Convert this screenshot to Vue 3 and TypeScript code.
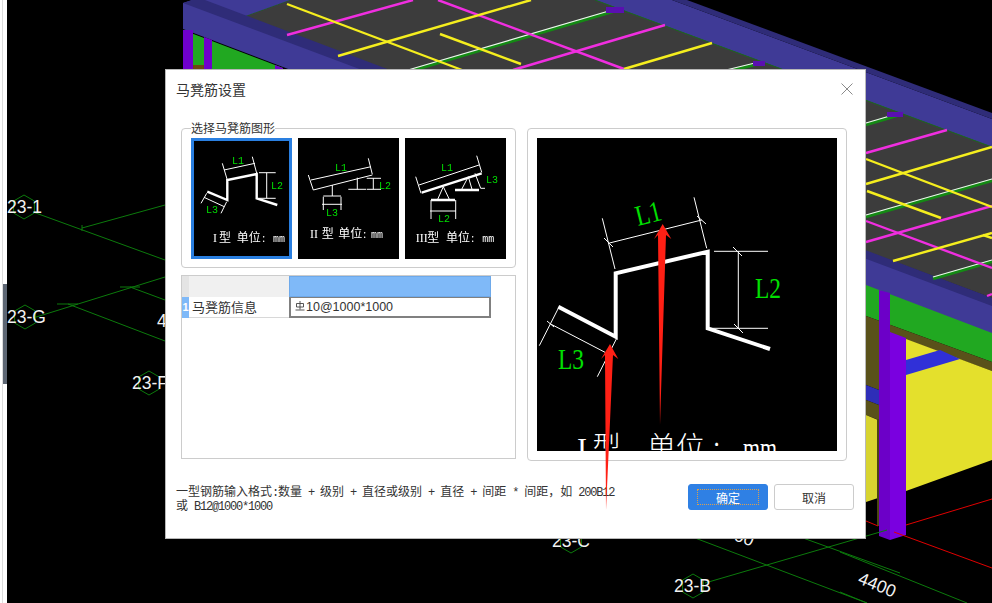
<template>
  <div class="screen">
    <!-- 3D model behind the dialog -->
    <svg class="scene" viewBox="0 0 992 603" width="992" height="603">
      <polygon points="290,0 595,0 992,147 992,298 240,18" fill="#3c3c3c" />
      <line x1="240" y1="18" x2="290" y2="0" stroke="#1d6b1d" />
      <polygon points="595,0 672,0 992,119 992,147" fill="#3f3a96" />
      <polygon points="672,0 687,0 992,113 992,119" fill="#2f2c78" />
      <line x1="595" y1="0" x2="992" y2="147" stroke="#1d6b1d" />

      <polygon points="183,30 183,75 283,75 283,68" fill="#21a821" />
      <polygon points="183,3 192,0 290,0 240,18 992,298 992,337 183,29" fill="#3f3a96" />
      <polygon points="192,0 205,0 992,298 992,306 183,3" fill="#2f2c78" />
      <rect x="183" y="30" width="10" height="45" fill="#6f00cc" />
      <rect x="193" y="65" width="11" height="10" fill="#6b4a10" />
      <polygon points="204,37 212,40 212,75 204,75" fill="#6f00cc" />
      <polygon points="275,65 283,68 283,75 275,75" fill="#6f00cc" />

      <line
        v-for="(l, i) in greenBars"
        :key="'g' + i"
        :x1="l[0]" :y1="l[1] + 1.5" :x2="l[2]" :y2="l[3] + 1.5"
        stroke="#148a14" stroke-width="3.4"
      />
      <line
        v-for="(l, i) in greenBars"
        :key="'w' + i"
        :x1="l[0]" :y1="l[1]" :x2="l[2]" :y2="l[3]"
        stroke="#f2f2f2" stroke-width="1.2"
      />
      <rect x="606" y="7" width="18" height="6" fill="#5a10b0" />
      <rect x="753" y="61" width="12" height="5" fill="#5a10b0" />
      <rect x="887" y="112" width="16" height="5" fill="#5a10b0" />
      <line
        v-for="(l, i) in pinkBars"
        :key="'p' + i"
        :x1="l[0]" :y1="l[1]" :x2="l[2]" :y2="l[3]"
        stroke="#f02ee0" stroke-width="2.4"
      />
      <line
        v-for="(l, i) in yellowBars"
        :key="'y' + i"
        :x1="l[0]" :y1="l[1]" :x2="l[2]" :y2="l[3]"
        stroke="#f5ee1e" stroke-width="2.4"
      />

      <polygon points="866,285 992,333 992,362 866,316" fill="#21a821" />
      <polygon points="866,316 992,362 992,371 879,330 879,390 866,385" fill="#59511a" />
      <polygon points="906,339 992,371 992,460 906,491" fill="#e4e02c" />
      <polygon points="906,360 940,350 960,359 906,375" fill="#3030d8" />
      <polygon points="866,385 879,390 879,405 866,400" fill="#2e2eb8" />
      <polygon points="866,400 879,405 879,420 866,415" fill="#59511a" />
      <polygon points="866,415 878,420 878,498 866,502" fill="#d8d430" />
      <line x1="878" y1="420" x2="878" y2="526" stroke="#4a4612" stroke-width="2" />
      <polygon points="879,290 890,293 890,540 879,536" fill="#6c00c8" />
      <polygon points="890,332 906,338 906,535 890,540" fill="#7a00e0" />

      <line x1="906" y1="525" x2="992" y2="499" stroke="#e00000" />
      <line x1="894" y1="532" x2="992" y2="568" stroke="#e00000" />
      <line x1="866" y1="521" x2="878" y2="526" stroke="#e00000" />

      <line
        v-for="(l, i) in gridLines"
        :key="'n' + i"
        :x1="l[0]" :y1="l[1]" :x2="l[2]" :y2="l[3]"
        stroke="#0c7a0c"
      />
      <polygon
        v-for="a in axes"
        :key="'h' + a.text"
        :points="hexagon(a.cx, a.cy)"
        fill="none"
        stroke="#0c7a0c"
      />
      <text v-for="a in axes" :key="a.text" :x="a.x" :y="a.cy + 6" class="axis">{{ a.text }}</text>
      <text x="157" y="327" class="axis">4</text>
      <text class="axis" transform="translate(857 583) rotate(22)">4400</text>
      <text class="axis" transform="translate(733 540) rotate(20)">00</text>
    </svg>

    <div class="side-strip"><span class="side-handle"></span></div>

    <section class="dialog">
      <header class="dialog-header">
        <h1 class="dialog-title">马凳筋设置</h1>
        <svg class="dialog-close" viewBox="0 0 12 12" width="12" height="12">
          <path d="M.5.5l11 11M11.5.5l-11 11" stroke="#8a8a8a" fill="none" />
        </svg>
      </header>

      <div class="dialog-main">
        <div class="left-col">
          <div class="group">
            <span class="group-legend">选择马凳筋图形</span>
            <div class="thumbs">
              <div
                v-for="(t, i) in thumbs"
                :key="i"
                class="thumb"
                :class="{ 'thumb--active': i === 0 }"
              >
                <svg viewBox="0 0 101 121" width="101" height="121">
                  <path :d="t.thick" class="thick" />
                  <path :d="t.thin" class="thin" />
                  <text
                    v-for="l in t.labels"
                    :key="l.text"
                    :x="l.x"
                    :y="l.y"
                    class="thumb-label"
                  >{{ l.text }}</text>
                  <g>
                    <text :x="t.cap[0]" :y="t.base" class="cap-latin">{{ t.type }}</text>
                    <text :x="t.cap[1]" :y="t.base" class="cap-cjk">型</text>
                    <text :x="t.cap[2]" :y="t.base" class="cap-cjk">单位</text>
                    <text :x="t.cap[3]" :y="t.base" class="cap-latin">:</text>
                    <text :x="t.cap[4]" :y="t.base" class="cap-mm">mm</text>
                  </g>
                </svg>
              </div>
            </div>
          </div>

          <div class="grid">
            <div class="grid-head">
              <span class="grid-corner"></span>
              <span class="grid-name"></span>
              <span class="grid-value grid-value--head"></span>
            </div>
            <div class="grid-row">
              <span class="grid-index">1</span>
              <span class="grid-name">马凳筋信息</span>
              <span class="grid-value">
                <svg class="rebar" viewBox="0 0 10 10" width="10" height="10">
                  <path d="M1.5 2.5h7v3.5h-7zM5 0v8.5M.5 9h9" fill="none" stroke="#444" stroke-width="0.9" />
                </svg>10@1000*1000
              </span>
            </div>
          </div>
        </div>

        <div class="preview">
          <svg viewBox="0 0 300 313" width="300" height="313">
            <path
              d="M21.3 168.7L78.7 198.7V135.3L170.7 113.7V190.3L233 211"
              fill="none"
              stroke="#fff"
              stroke-width="4"
            />
            <path
              d="M65.3 80.3L78 131M157 59.3L169.7 110.3M71.3 105.3L164.7 82M67 100l9 9M160 78l9 8
                 M177 113.3H231M173 190.3H231M201.3 113.3V190.3M196 109l9 9M197 186l9 9
                 M21.3 170.3L2.3 207.7M79.7 200.3L60.3 238.7M13.7 186L68 214.3M10 183l7 6"
              fill="none"
              stroke="#fff"
            />
            <text
              class="preview-label"
              textLength="26"
              lengthAdjust="spacingAndGlyphs"
              transform="translate(101 88) rotate(-14)"
            >L1</text>
            <text class="preview-label" x="218" y="160" textLength="26" lengthAdjust="spacingAndGlyphs">L2</text>
            <text class="preview-label" x="21" y="231" textLength="26" lengthAdjust="spacingAndGlyphs">L3</text>
            <text x="40" y="320" class="preview-latin">I</text>
            <text x="55" y="320" class="preview-cjk">型</text>
            <text x="110" y="320" class="preview-cjk">单位</text>
            <text x="176" y="320" class="preview-cjk">:</text>
            <text x="206" y="320" class="preview-latin" textLength="34" lengthAdjust="spacingAndGlyphs">mm</text>
          </svg>
        </div>
      </div>

      <footer class="dialog-footer">
        <div class="hint">
          <div>一型钢筋输入格式<span class="lat">:</span>数量<span class="lat"> + </span>级别<span class="lat"> + </span>直径或级别<span class="lat"> + </span>直径<span class="lat"> + </span>间距<span class="lat"> * </span>间距，如<span class="lat"> 200B12</span></div>
          <div>或<span class="lat"> B12@1000*1000</span></div>
        </div>
        <div class="actions">
          <button class="btn btn--primary" type="button"><span class="btn-focus">确定</span></button>
          <button class="btn" type="button">取消</button>
        </div>
      </footer>
    </section>

    <!-- annotation arrows drawn on top of the screenshot -->
    <svg class="arrows" viewBox="0 0 992 603" width="992" height="603">
      <polygon points="662.7,224 671.3,239 666,235 660,425 658,235 654,239" fill="#ff2015" />
      <polygon points="610,344 618.3,359 613,355 606,510 605,355 601,359" fill="#ff2015" />
    </svg>
  </div>
</template>

<script setup lang="ts">
type Seg = [number, number, number, number]

interface Axis {
  text: string
  x: number
  cx: number
  cy: number
}

interface Thumb {
  thick: string
  thin: string
  labels: { text: string; x: number; y: number }[]
  type: string
  cap: number[]
  base: number
}

const greenBars: Seg[] = [
  [408, 70, 619, 8],
  [726, 70, 759, 62],
  [866, 123, 900, 113],
  [866, 215, 992, 179],
  [933, 277, 992, 260],
]

const pinkBars: Seg[] = [
  [287, 35, 413, 0],
  [438, 0, 624, 69],
  [513, 70, 665, 25],
  [866, 153, 947, 130],
  [866, 221, 992, 268],
  [866, 242, 992, 206],
  [987, 296, 992, 294],
]

const yellowBars: Seg[] = [
  [287, 4, 462, 70],
  [338, 56, 531, 0],
  [440, 34, 521, 64],
  [624, 69, 712, 43],
  [866, 159, 992, 207],
  [866, 184, 992, 147],
  [867, 191, 941, 218],
  [893, 261, 992, 233],
  [983, 235, 992, 238],
]

const gridLines: Seg[] = [
  [33, 212, 165, 260],
  [82, 228, 165, 205],
  [33, 318, 165, 277],
  [68, 304, 165, 341],
  [130, 287, 165, 300],
  [57, 304, 78, 304],
  [120, 287, 140, 287],
  [82, 225, 82, 231],
  [695, 538, 867, 603],
  [705, 583, 887, 530],
  [803, 538, 900, 573],
  [840, 552, 967, 603],
  [840, 592, 867, 603],
]

const axes: Axis[] = [
  { text: '23-1', x: 7, cx: 24, cy: 207 },
  { text: '23-G', x: 7, cx: 25, cy: 317 },
  { text: '23-F', x: 132, cx: 149, cy: 383 },
  { text: '23-C', x: 552, cx: 571, cy: 541 },
  { text: '23-B', x: 674, cx: 693, cy: 586 },
]

const hexagon = (cx: number, cy: number) => {
  const pts: string[] = []
  for (let i = 0; i < 6; i++) {
    const a = (Math.PI / 3) * i - Math.PI / 2
    pts.push(`${(cx + 12 * Math.cos(a)).toFixed(1)},${(cy + 12 * Math.sin(a)).toFixed(1)}`)
  }
  return pts.join(' ')
}

const thumbs: Thumb[] = [
  {
    thick: 'M16.3 53.7L36.3 62V42L65.7 36V60.3L86.3 67',
    thin: 'M31.3 25.3L36.3 42M61.3 18.7L65.7 35.3M33 32L64 25.3M68 34.7H84.7M68 60.3H84.7M75.7 34.7V60.3M15.7 55.3L10 65.3M35.7 63.7L30 75.3M13 59.3L33.3 68.7',
    labels: [
      { text: 'L1', x: 41, y: 26 },
      { text: 'L2', x: 80, y: 51 },
      { text: 'L3', x: 15, y: 75 },
    ],
    type: 'I',
    cap: [22, 28, 45.7, 71, 82],
    base: 104,
  },
  {
    thick: '',
    thin: 'M13 42L73 28.7M15.3 52L74.3 37M10.3 37L15.3 52M70.3 20.3L74.3 36.3M34.3 47V58M25.3 58H43M25.3 58.7V72M43 58.7V72M24 66.3H44M59.3 39.7V51.3M50.3 51.3H68M68.7 40.3H83M68.7 51.3H83M75.3 40.3V51.3',
    labels: [
      { text: 'L1', x: 37, y: 33 },
      { text: 'L2', x: 81, y: 51 },
      { text: 'L3', x: 28, y: 78 },
    ],
    type: 'II',
    cap: [12, 23.7, 40.3, 65, 73],
    base: 100,
  },
  {
    thick: 'M16.7 54.7L76.7 35.3M26 62H50M50 52H74',
    thin: 'M14 47L74 27M10.7 38.7L16 55.3M71.7 17.7L76.7 34.3M38.3 48.7L32.7 61.3M38.3 48.7L44.3 61.3M26 62V81M50.7 62V81M25 73H51M63.3 38.7L56.7 51.3M63.3 38.7L67 51.3M70 35.3L75.7 50.3H80',
    labels: [
      { text: 'L1', x: 36, y: 33 },
      { text: 'L3', x: 81, y: 45 },
      { text: 'L2', x: 33, y: 84 },
    ],
    type: 'III',
    cap: [10.7, 22.3, 41, 66, 77.3],
    base: 104,
  },
]
</script>

<style scoped>
.screen {
  position: relative;
  width: 992px;
  height: 603px;
  overflow: hidden;
  background: #000;
  font-family: "Noto Sans CJK SC", "Liberation Sans", sans-serif;
}

.scene,
.arrows {
  position: absolute;
  left: 0;
  top: 0;
}
.arrows {
  pointer-events: none;
}

.axis {
  font-family: "Liberation Sans", sans-serif;
  font-size: 17.5px;
  fill: #f2f2f2;
}

.side-strip {
  position: absolute;
  left: 0;
  top: 0;
  width: 7px;
  height: 603px;
  background: linear-gradient(to right, #fff 2px, #dcdcdc 2px, #dcdcdc 3px, #fff 3px);
}
.side-handle {
  position: absolute;
  left: 3px;
  top: 284px;
  width: 4px;
  height: 100px;
  background: #5d6673;
}

.dialog {
  position: absolute;
  left: 165px;
  top: 69px;
  width: 701px;
  height: 470px;
  box-sizing: border-box;
  display: flex;
  flex-direction: column;
  background: #fff;
  border: 1px solid #b8b8b8;
}

.dialog-header {
  display: flex;
  justify-content: space-between;
  align-items: flex-start;
  height: 58px;
  box-sizing: border-box;
  padding: 9px 12px 0 10px;
}
.dialog-title {
  margin: 0;
  font-size: 14px;
  font-weight: 400;
  line-height: 20px;
  color: #333;
}
.dialog-close {
  margin-top: 4px;
}

.dialog-main {
  display: flex;
  gap: 11px;
  padding: 0 18px 0 15px;
}

.left-col {
  display: flex;
  flex-direction: column;
  gap: 7px;
  width: 335px;
}

.group {
  position: relative;
  height: 140px;
  box-sizing: border-box;
  padding: 9px 9px 0;
  border: 1px solid #ccc;
  border-radius: 4px;
}
.group-legend {
  position: absolute;
  left: 9px;
  top: -9px;
  font-size: 12px;
  line-height: 16px;
  color: #333;
  background: #fff;
}

.thumbs {
  display: flex;
  gap: 6px;
}
.thumb {
  width: 101px;
  height: 121px;
  background: #000;
}
.thumb svg {
  display: block;
  will-change: transform;
}
.thumb--active {
  outline: 3px solid #2a7fe0;
  outline-offset: -3px;
}

.thick {
  fill: none;
  stroke: #fff;
  stroke-width: 2.4;
}
.thin {
  fill: none;
  stroke: #fff;
  stroke-width: 1;
}
.thumb-label {
  font-family: "Liberation Mono", monospace;
  font-size: 10px;
  fill: #00e000;
}
.cap-latin {
  font-family: "Liberation Serif", serif;
  font-size: 12px;
  fill: #fff;
}
.cap-cjk {
  font-size: 12px;
  fill: #fff;
}
.cap-mm {
  font-family: "Liberation Mono", monospace;
  font-size: 10px;
  fill: #fff;
}

.grid {
  height: 184px;
  box-sizing: border-box;
  border: 1px solid #ccc;
}
.grid-head,
.grid-row {
  display: grid;
  grid-template-columns: 7px 100px 202px;
}
.grid-head {
  height: 21px;
}
.grid-corner {
  background: #e4e4e4;
}
.grid-head .grid-name {
  background: #f0f0f0;
}
.grid-row {
  height: 21px;
}
.grid-index {
  background: #7fb9f8;
  color: #fff;
  font-family: "Liberation Sans", sans-serif;
  font-size: 11px;
  font-weight: 700;
  line-height: 20px;
  text-align: center;
}
.grid-row .grid-name {
  padding-left: 3px;
  border-bottom: 1px solid #d8d8d8;
  font-size: 13px;
  line-height: 20px;
  color: #333;
}
.grid-value {
  box-sizing: border-box;
  display: flex;
  align-items: center;
  gap: 1px;
  padding: 0 0 0 4px;
  border: 2px solid #808080;
  border-top-width: 1px;
  font-family: "Liberation Sans", sans-serif;
  font-size: 12.5px;
  color: #333;
}
.grid-value--head {
  background: #7fb9f8;
  border: 1px solid #6ea9ea;
}
.rebar {
  margin-top: -2px;
}

.preview {
  width: 320px;
  height: 333px;
  box-sizing: border-box;
  padding: 9px;
  border: 1px solid #ccc;
  border-radius: 4px;
}
.preview svg {
  display: block;
  background: #000;
}
.preview-label {
  font-family: "Liberation Serif", serif;
  font-size: 29px;
  fill: #00e000;
}
.preview-latin {
  font-family: "Liberation Serif", serif;
  font-size: 30px;
  fill: #fff;
}
.preview-cjk {
  font-size: 29px;
  font-weight: 300;
  fill: #fff;
}

.dialog-footer {
  display: flex;
  justify-content: space-between;
  align-items: flex-start;
  margin-top: 23px;
  padding: 0 11px 0 10px;
}
.hint {
  font-size: 12px;
  line-height: 14px;
  color: #333;
}
.hint div {
  height: 14px;
  white-space: nowrap;
}
.lat {
  font-family: "Liberation Mono", monospace;
  font-size: 12px;
  letter-spacing: -1.2px;
  white-space: pre;
}

.actions {
  display: flex;
  gap: 6px;
}
.btn {
  width: 80px;
  height: 26px;
  padding: 0;
  box-sizing: border-box;
  display: flex;
  align-items: center;
  justify-content: center;
  font-family: inherit;
  font-size: 12px;
  color: #333;
  background: #fff;
  border: 1px solid #ccc;
  border-radius: 3px;
}
.btn--primary {
  color: #fff;
  background: #2f80e4;
  border-color: #2f80e4;
}
.btn-focus {
  width: 62px;
  height: 16px;
  line-height: 15px;
  box-sizing: border-box;
  border: 1px dotted #d9a050;
}
</style>
